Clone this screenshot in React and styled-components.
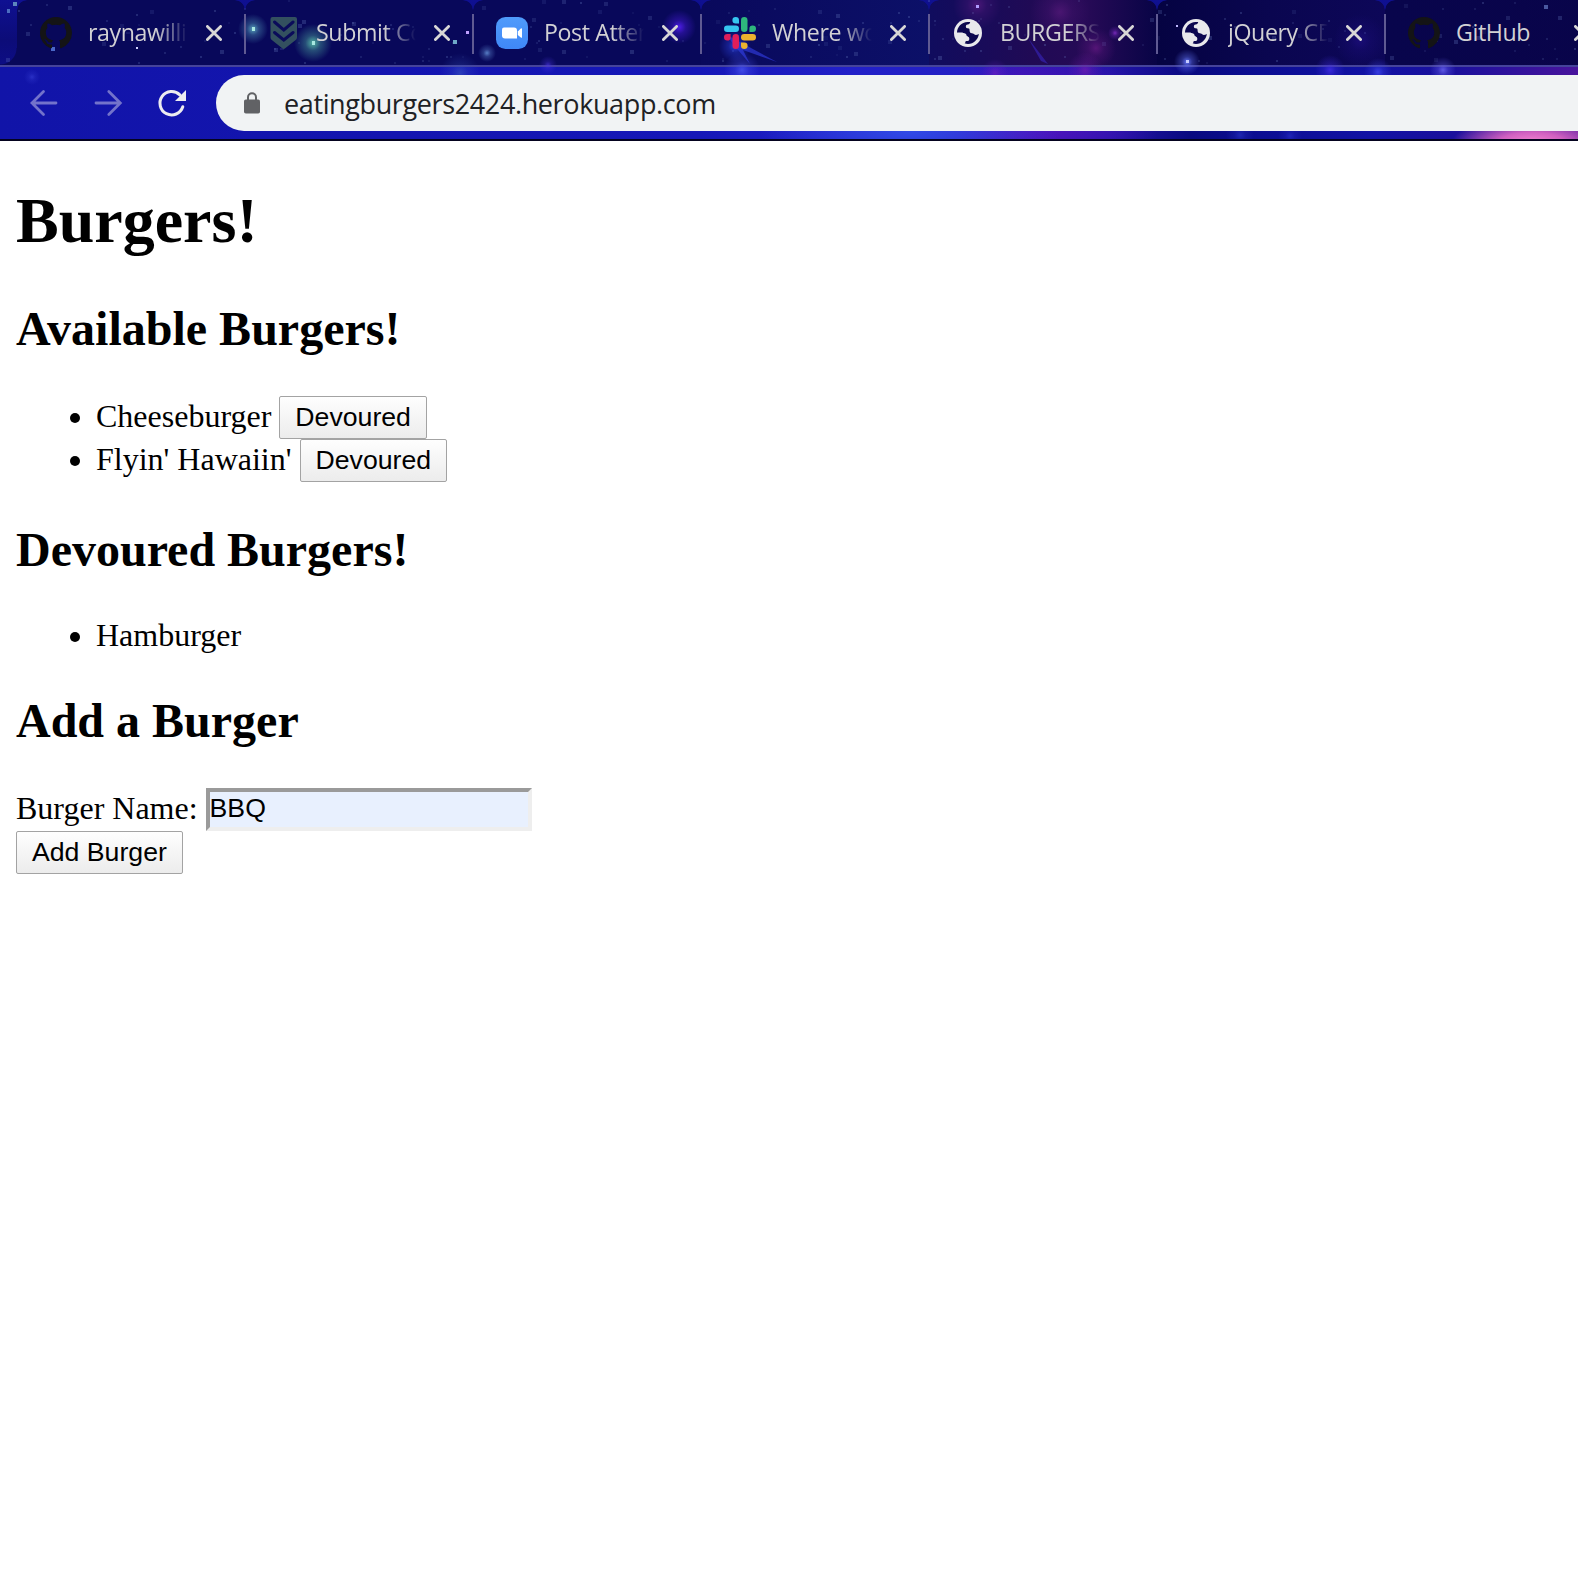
import React, { useState } from 'react';
import styled, { createGlobalStyle } from 'styled-components';

const GlobalStyle = createGlobalStyle`
  html, body { margin: 0; padding: 0; background: #fff; }
  body { overflow: hidden; }
  * { box-sizing: border-box; }
`;

const Window = styled.div`
  display: flex;
  flex-direction: column;
  width: 100%;
  height: 100vh;
  overflow: hidden;
  font-family: 'Liberation Serif', serif;
  color: #000;
`;

/* ---------- browser chrome ---------- */

const Chrome = styled.header`
  position: relative;
  flex: none;
  height: 141px;
  overflow: hidden;
  border-bottom: 2px solid #04031f;
  font-family: 'Open Sans', 'Noto Sans', sans-serif;
  background:
    radial-gradient(ellipse 80px 24px at 1532px 142px, #f283cf 0%, #d060c0 40%, rgba(120, 40, 180, 0) 100%),
    radial-gradient(ellipse 150px 40px at 910px 132px, rgba(50, 76, 232, 0.95), rgba(40, 50, 220, 0) 100%),
    radial-gradient(ellipse 120px 70px at 1040px 120px, rgba(82, 18, 190, 0.95), rgba(60, 18, 180, 0) 100%),
    linear-gradient(90deg, #1114a8 0, #1415b0 400px, #1618b8 700px, #2220c8 850px, #2420c4 960px, #3516b4 1020px, #2414a8 1110px, #090a80 1190px, #0c0e92 1260px, #1212a4 1370px, #1a109c 1450px, #48149c 1578px);
`;

const Sky = styled.svg`
  position: absolute;
  left: 0;
  top: 0;
  z-index: 1;
  pointer-events: none;
`;

const TabStrip = styled.nav`
  display: flex;
  height: 67px;
  padding-left: 17px;
  border-bottom: 2px solid #45439a;
  background: linear-gradient(#0f1092, #0c0c78 40px, #0d0d84);
`;

const Tab = styled.div`
  position: relative;
  display: flex;
  align-items: center;
  flex: none;
  width: 228px;
  height: 66px;
  padding-left: 23px;
  border-radius: 10px 10px 0 0;
  background: ${(p) => p.$tint};
  background-clip: padding-box;
  border-bottom: 1px solid transparent;

  & > * {
    position: relative;
    z-index: 2;
  }

  &::after {
    content: '';
    display: ${(p) => (p.$last ? 'none' : 'block')};
    position: absolute;
    right: -1px;
    top: 14px;
    width: 2px;
    height: 40px;
    background: #5f5a92;
    z-index: 2;
  }

  &:first-child::before {
    content: '';
    position: absolute;
    right: 100%;
    bottom: 0;
    width: 17px;
    height: 17px;
    background: radial-gradient(circle at 0 0, transparent 16px, #08085a 17px);
  }
`;

const Favicon = styled.span`
  display: flex;
  flex: none;
  width: 32px;
  height: 32px;
  align-items: center;
  justify-content: center;
`;

const TabTitle = styled.span`
  flex: none;
  width: 100px;
  margin-left: 16px;
  overflow: hidden;
  white-space: nowrap;
  font-size: 23.2px;
  line-height: 32px;
  padding-bottom: 2px;
  letter-spacing: -0.4px;
  color: #d2d1d4;
  ${(p) => !p.$whole && 'mask-image: linear-gradient(90deg, #000 68px, transparent 100px);'}
`;

const CloseButton = styled.button`
  display: flex;
  flex: none;
  margin: 0 0 0 18px;
  padding: 0;
  border: 0;
  background: none;
`;

const Toolbar = styled.div`
  position: relative;
  z-index: 2;
  display: flex;
  align-items: center;
  height: 72px;
  padding-left: 28px;
`;

const NavButton = styled.button`
  display: flex;
  flex: none;
  width: 32px;
  height: 32px;
  margin-right: 32px;
  padding: 0;
  border: 0;
  background: none;
  color: ${(p) => (p.disabled ? '#7373cb' : '#ececf0')};
`;

const Omnibox = styled.div`
  display: flex;
  flex: 1;
  align-items: center;
  height: 56px;
  margin-left: -4px;
  padding-left: 28px;
  border-radius: 28px 0 0 28px;
  background: #f1f3f4;
`;

const Url = styled.span`
  margin-left: 24px;
  padding-top: 1px;
  font-size: 27px;
  line-height: 40px;
  letter-spacing: -0.38px;
  color: #202124;
`;

/* ---------- icons ---------- */

const GitHubIcon = () => (
  <svg width="32" height="32" viewBox="0 0 16 16" fill="#141416">
    <path d="M8 0C3.58 0 0 3.58 0 8c0 3.54 2.29 6.53 5.47 7.59.4.07.55-.17.55-.38 0-.19-.01-.82-.01-1.49-2.01.37-2.53-.49-2.69-.94-.09-.23-.48-.94-.82-1.13-.28-.15-.68-.52-.01-.53.63-.01 1.08.58 1.23.82.72 1.21 1.87.87 2.33.66.07-.52.28-.87.51-1.07-1.78-.2-3.64-.89-3.64-3.95 0-.87.31-1.59.82-2.15-.08-.2-.36-1.02.08-2.12 0 0 .67-.21 2.2.82.64-.18 1.32-.27 2-.27.68 0 1.36.09 2 .27 1.53-1.04 2.2-.82 2.2-.82.44 1.1.16 1.92.08 2.12.51.56.82 1.27.82 2.15 0 3.07-1.87 3.75-3.65 3.95.29.25.54.73.54 1.48 0 1.07-.01 1.93-.01 2.2 0 .21.15.46.55.38A8.013 8.013 0 0 0 16 8c0-4.42-3.58-8-8-8z" />
  </svg>
);

const ShieldIcon = () => (
  <svg width="32" height="32" viewBox="0 0 32 32">
    <path d="M4.500 0h22.500q2 0 2 2v18.500q0 1.200-1 2.200L17.200 31.300q-1.500 1.200-3 0L3.500 22.700q-1-1-1-2.200V2q0-2 2-2z" fill="#33505f" />
    <path d="M6.500 5l9.300 8 9.300-8M6.500 15.500l9.300 7.500 9.300-7.500" fill="none" stroke="#0a0b5a" strokeWidth="3" strokeLinecap="round" />
  </svg>
);

const ZoomIcon = () => (
  <svg width="32" height="32" viewBox="0 0 32 32">
    <defs>
      <linearGradient id="zoomBlue" x1="0" y1="0" x2="0" y2="1">
        <stop offset="0" stopColor="#4f9bfb" />
        <stop offset="1" stopColor="#3f87f7" />
      </linearGradient>
    </defs>
    <rect width="32" height="32" rx="9.500" fill="url(#zoomBlue)" />
    <path d="M8 10.500h10q3 0 3 3v8H9q-3 0-3-3v-6q0-2 2-2z" fill="#fff" />
    <path d="M21.800 14.500l3-3q1.200-.8 1.200.6v8q0 1.300-1.200.5l-3-2.600z" fill="#fff" />
  </svg>
);

const SlackIcon = () => (
  <svg width="32" height="32" viewBox="0 0 32 32">
    <g fill="#36c5f0">
      <rect x="0" y="8.500" width="15" height="6.500" rx="3.250" />
      <path d="M15 6.600h-3.200A3.300 3.300 0 1 1 15 3.300z" />
    </g>
    <g fill="#2eb67d">
      <rect x="17" y="0" width="6.500" height="15" rx="3.250" />
      <path d="M25.400 15v-3.200a3.300 3.300 0 1 1 3.300 3.200z" />
    </g>
    <g fill="#ecb22e">
      <rect x="17" y="17" width="15" height="6.500" rx="3.250" />
      <path d="M17 25.400h3.200a3.300 3.300 0 1 1-3.200 3.300z" />
    </g>
    <g fill="#e01e5a">
      <rect x="8.500" y="17" width="6.500" height="15" rx="3.250" />
      <path d="M6.600 17v3.200A3.300 3.300 0 1 1 3.300 17z" />
    </g>
  </svg>
);

const GlobeIcon = () => (
  <svg width="28" height="28" viewBox="0 0 28 28">
    <circle cx="14" cy="14" r="14" fill="#e9e9ec" />
    <path
      d="M3 14C3 8 7.600 3.200 13.500 3h2.700c-.3 1.500-1 2.200-2.500 2.400-1.600.2-1.900 1-1.800 2.600 0 1 .8 1.300 2 1.300 1.500 0 1.700.9 1.700 2.200 0 1.700.6 2.600 2.300 2.700 1.400.1 2.200.8 2.700 1.400.8.700 2.500.3 4.300-.6C24 20.500 19.800 25 14 25c-1.200 0-2.300-.2-3.300-.5v-3.200h2.200c1.200 0 1.500-.5 1.500-1.700 0-1.500-.4-2.600-2.300-2.600-2 0-2.300-1-2.500-2.300-.2-1-1-1.300-2.200-1.300H3.200z"
      fill="#0d0850"
    />
    <path d="M3 14h5.200c3.600 0 4.600 1.600 4.600 3.600 2 0 2.500 1 2.500 2.300 0 1.600-1 2-3 2.200-.9.100-1.100.9-1.100 2.600C6.500 23.500 3 19.500 3 14z" fill="#e9e9ec" />
  </svg>
);

const CloseIcon = () => (
  <svg width="16" height="16" viewBox="0 0 16 16" fill="none" stroke="#d8d7d6" strokeWidth="2.800" strokeLinecap="round">
    <path d="M1.400 1.400l13.200 13.200M14.600 1.400L1.400 14.600" />
  </svg>
);

const ArrowIcon = ({ flip }) => (
  <svg width="32" height="32" viewBox="0 0 32 32" fill="none" stroke="currentColor" strokeWidth="2.800" strokeLinecap="round">
    <path d={flip ? 'M4 16h24M16.800 4.500L28.300 16 16.800 27.500' : 'M28 16h-24M15.500 4.500L4 16l11.500 11.500'} />
  </svg>
);

const ReloadIcon = () => (
  <svg width="32" height="32" viewBox="0 0 32 32">
    <path d="M24.200 7.500A11.700 11.700 0 1 0 27.200 19.500" transform="translate(-.4 .3)" fill="none" stroke="currentColor" strokeWidth="3" strokeLinecap="round" />
    <path d="M30 3v11H19z" fill="currentColor" />
  </svg>
);

const LockIcon = () => (
  <svg width="16" height="22" viewBox="0 0 16 22">
    <rect x="0" y="7.500" width="16" height="14" rx="1.800" fill="#616265" />
    <path d="M4 8V5.200a4 4 0 0 1 8 0V8" fill="none" stroke="#616265" strokeWidth="2" />
  </svg>
);

const SPECKS = Array.from({ length: 190 }, (_, i) => {
  const r = (n) => {
    const v = Math.sin(i * 12.9898 + n * 78.233) * 43758.5453;
    return v - Math.floor(v);
  };
  return { x: Math.floor(r(1) * 789) * 2, y: Math.floor(r(2) * 32) * 2, s: r(3) > 0.75 ? 4 : 2, o: 0.08 + r(4) * 0.2 };
});

const GLOWS = [
  [253, 29, 15, '#62b8cc', 0.85], [313, 43, 19, '#5fd0b0', 0.85], [487, 53, 9, '#6a9ae0', 0.8],
  [679, 27, 17, '#5a20ff', 0.85], [735, 46, 16, '#3350ff', 0.8], [1187, 62, 13, '#6678ff', 0.95],
  [548, 65, 9, '#4a34e0', 0.7], [742, 70, 18, '#4a55f0', 0.8], [977, 5, 24, '#6a1f8c', 0.6],
  [1060, 12, 30, '#5e1c80', 0.65], [1096, 48, 20, '#6a1a86', 0.7], [1115, 33, 7, '#8a2fd0', 0.8],
  [995, 73, 14, '#6a20c0', 0.7], [1085, 70, 18, '#8020b0', 0.6], [1330, 70, 15, '#4430e8', 0.8],
  [1378, 72, 14, '#4048f0', 0.8], [1443, 70, 13, '#6a64f0', 0.85], [1360, 40, 26, '#22108c', 0.6],
  [32, 77, 8, '#3a42d8', 0.6], [460, 73, 20, '#3b58c0', 0.6], [1240, 135, 14, '#2630c0', 0.7], [1290, 136, 12, '#2a30cc', 0.6],
];

const Nebula = () => (
  <Sky width="1578" height="139" viewBox="0 0 1578 139">
    <defs>
      {GLOWS.map(([, , , color], i) => (
        <radialGradient id={`glow${i}`} key={i}>
          <stop offset="0" stopColor={color} />
          <stop offset="0.4" stopColor={color} stopOpacity="0.4" />
          <stop offset="1" stopColor={color} stopOpacity="0" />
        </radialGradient>
      ))}
    </defs>
    {SPECKS.map((s, i) => (
      <rect key={i} x={s.x} y={s.y} width={s.s} height={s.s} fill="#6f86c8" opacity={s.o} />
    ))}
    {GLOWS.map(([x, y, r, , o], i) => (
      <circle key={i} cx={x} cy={y} r={r} fill={`url(#glow${i})`} opacity={o} />
    ))}
    <path d="M727 35l50 27-34-12 7 14-17-20z" fill="#3440e8" opacity="0.6" />
    <path d="M1028 38l20 26-7-3z" fill="#3a28c8" opacity="0.55" />
    <g fill="#a8e8e0">
      <rect x="252" y="27" width="3" height="4" />
      <rect x="312" y="41" width="3" height="4" />
      <rect x="136" y="47" width="2" height="2" fill="#cfd0ff" />
      <rect x="51" y="47" width="4" height="4" fill="#4a68c8" />
      <rect x="13" y="2" width="4" height="4" fill="#5d86bd" />
      <rect x="7" y="9" width="3" height="4" fill="#4b6cc0" />
      <rect x="466" y="31" width="3" height="3" fill="#bfa0ff" />
      <rect x="453" y="40" width="4" height="4" fill="#6fa8c8" />
      <rect x="976" y="5" width="3" height="3" fill="#b09cff" />
      <rect x="1176" y="25" width="2" height="2" fill="#c0b8ff" />
      <rect x="1186" y="60" width="3" height="3" fill="#c5ccff" />
      <rect x="1544" y="5" width="4" height="4" fill="#4a58a0" />
    </g>
  </Sky>
);

/* ---------- page ---------- */

const Page = styled.main`
  flex: 1;
  padding: 43px 16px 0;
  background: #fff;
  font-size: 32px;
`;

const Title = styled.h1`
  margin: 0 0 43px;
  font-size: 64px;
  line-height: 74px;
  font-weight: bold;
`;

const SectionTitle = styled.h2`
  margin: 0 0 40px;
  font-size: 48px;
  line-height: 55px;
  font-weight: bold;
`;

const BurgerList = styled.ul`
  margin: 0 0 40px;
  padding-left: 80px;
`;

const BurgerItem = styled.li`
  height: ${(p) => (p.$withAction ? 43 : 36)}px;
  line-height: ${(p) => (p.$withAction ? 40 : 36)}px;
  white-space: nowrap;
`;

const PushButton = styled.button`
  height: 43px;
  margin: 0;
  padding: 0 15px 2px;
  border: 1px solid #a3a3a3;
  border-radius: 2px;
  background: linear-gradient(#fefefe, #ececec);
  color: #000;
  font-family: 'Liberation Sans', sans-serif;
  font-size: 26.667px;
  line-height: 38px;
  vertical-align: top;
`;

const Form = styled.form`
  display: flex;
  flex-direction: column;
  align-items: flex-start;
`;

const Field = styled.label`
  display: flex;
  gap: 8px;
  height: 43px;
  line-height: 40px;
  white-space: nowrap;
`;

const TextInput = styled.input`
  width: 326px;
  height: 43px;
  margin: 0;
  padding: 0 0 2px;
  border: 4px solid;
  border-color: #9a9a9a #eeeeee #eeeeee #9a9a9a;
  border-radius: 0;
  outline: 0;
  background: #e8f0fe;
  color: #000;
  font-family: 'Liberation Sans', sans-serif;
  font-size: 26.667px;
`;

const TABS = [
  { title: 'raynawilli', icon: GitHubIcon, tint: '#08085a' },
  { title: 'Submit Co', icon: ShieldIcon, tint: '#08085a' },
  { title: 'Post Atten', icon: ZoomIcon, tint: '#08085a' },
  { title: 'Where wo', icon: SlackIcon, tint: 'linear-gradient(90deg, #09095c, #0c1068)' },
  { title: 'BURGERS', icon: GlobeIcon, tint: 'linear-gradient(90deg, #100c5e, #200a55 45%, #260a56 70%, #080446)' },
  { title: 'jQuery CD', icon: GlobeIcon, tint: 'linear-gradient(90deg, #050342, #0a0650 50%, #0d0758)' },
  { title: 'GitHub', icon: GitHubIcon, tint: 'linear-gradient(90deg, #08054c, #09044a)', whole: true },
];

export default function App() {
  const [name, setName] = useState('BBQ');
  return (
    <Window>
      <GlobalStyle />
      <Chrome>
        <TabStrip>
          {TABS.map(({ title, icon: Icon, tint, whole }, i) => (
            <Tab key={title} $tint={tint} $last={i === TABS.length - 1}>
              <Favicon><Icon /></Favicon>
              <TabTitle $whole={whole}>{title}</TabTitle>
              <CloseButton aria-label="Close tab"><CloseIcon /></CloseButton>
            </Tab>
          ))}
        </TabStrip>
        <Nebula />
        <Toolbar>
          <NavButton disabled aria-label="Back"><ArrowIcon /></NavButton>
          <NavButton disabled aria-label="Forward"><ArrowIcon flip /></NavButton>
          <NavButton aria-label="Reload"><ReloadIcon /></NavButton>
          <Omnibox>
            <LockIcon />
            <Url>eatingburgers2424.herokuapp.com</Url>
          </Omnibox>
        </Toolbar>
      </Chrome>
      <Page>
        <Title>Burgers!</Title>
        <SectionTitle>Available Burgers!</SectionTitle>
        <BurgerList>
          <BurgerItem $withAction>Cheeseburger <PushButton>Devoured</PushButton></BurgerItem>
          <BurgerItem $withAction>Flyin' Hawaiin' <PushButton>Devoured</PushButton></BurgerItem>
        </BurgerList>
        <SectionTitle>Devoured Burgers!</SectionTitle>
        <BurgerList>
          <BurgerItem>Hamburger</BurgerItem>
        </BurgerList>
        <SectionTitle>Add a Burger</SectionTitle>
        <Form onSubmit={(e) => e.preventDefault()}>
          <Field>
            Burger Name:
            <TextInput value={name} onChange={(e) => setName(e.target.value)} />
          </Field>
          <PushButton>Add Burger</PushButton>
        </Form>
      </Page>
    </Window>
  );
}
